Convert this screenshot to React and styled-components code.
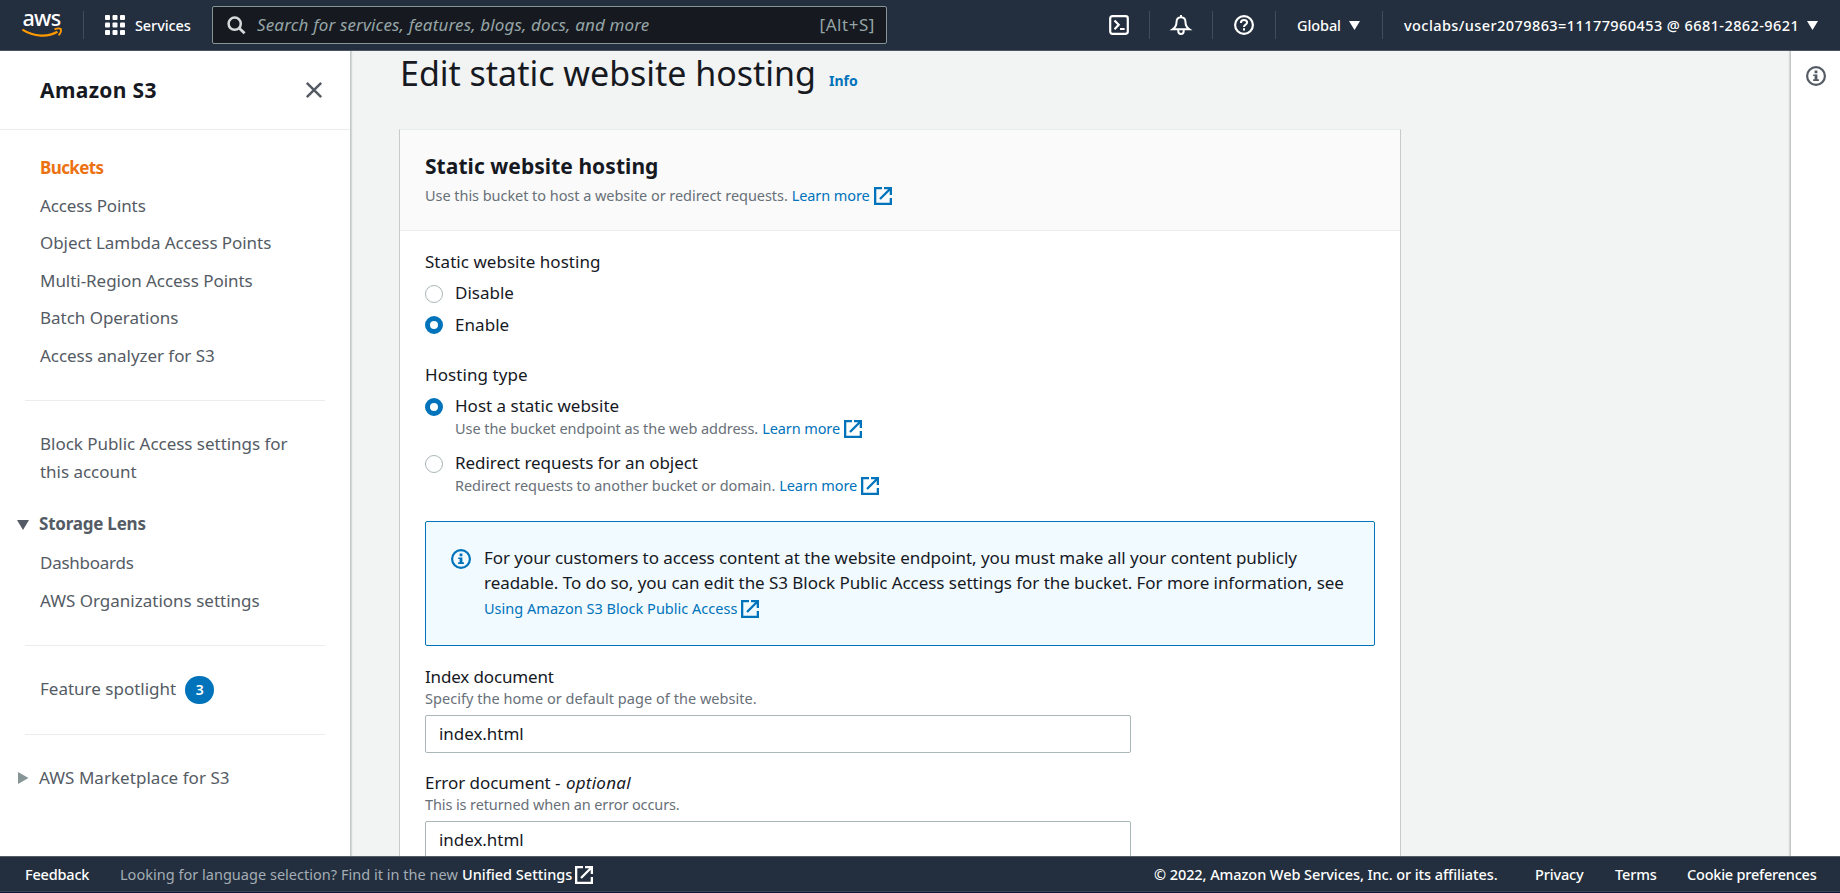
import React from 'react';
import styled, { createGlobalStyle, css } from 'styled-components';

const GlobalStyle = createGlobalStyle`
  *, *::before, *::after { box-sizing: border-box; }
  html, body { margin: 0; padding: 0; }
  body {
    font-family: "Noto Sans", "Open Sans", sans-serif;
    font-size: 17px;
    line-height: 22px;
    color: #16191f;
    background: #f2f3f3;
    overflow: hidden;
  }
  svg { display: block; flex: none; overflow: visible; }
  h1, h2, p, ul { margin: 0; padding: 0; }
`;

const tracking = css`letter-spacing: ${({ $ls = 0 }) => $ls}px;`;

const Page = styled.div`
  display: flex;
  flex-direction: column;
  height: 893px;
  overflow: hidden;
`;

/* ---------- top bar ---------- */
const TopBar = styled.header`
  flex: none;
  display: flex;
  align-items: center;
  height: 51px;
  padding: 0 22px;
  background: #232f3e;
  border-bottom: 1px solid #4b5563;
  color: #fff;
  font-size: 14.5px;
  font-weight: 500;
  white-space: nowrap;
`;
const Separator = styled.span`
  flex: none;
  width: 1px;
  height: 28px;
  background: #414d5c;
`;
const LogoSlot = styled.a`
  width: 61px;
`;
const ServicesButton = styled.a`
  display: flex;
  align-items: center;
  gap: 10px;
  width: 128px;
  padding-left: 21px;
  ${tracking}
`;
const SearchBox = styled.div`
  display: flex;
  align-items: center;
  width: 675px;
  height: 38px;
  padding: 0 11px 0 14px;
  background: #16191f;
  border: 1px solid #879596;
  border-radius: 2px;
  color: #95a5a6;
  font-size: 17px;
  font-weight: 400;
`;
const SearchHint = styled.em`
  flex: 1;
  margin-left: 11px;
  padding-bottom: 1px;
  ${tracking}
`;
const Shortcut = styled.span`
  padding-bottom: 1px;
  ${tracking}
`;
const UserTools = styled.nav`
  display: flex;
  align-items: center;
  margin-left: auto;
`;
const ToolButton = styled.a`
  display: flex;
  justify-content: center;
  width: 62px;
`;
const ToolMenu = styled.a`
  display: flex;
  align-items: center;
  justify-content: space-between;
  width: ${({ $width }) => $width}px;
  margin-left: ${({ $lead }) => $lead}px;
  margin-right: ${({ $trail = 0 }) => $trail}px;
  ${tracking}
`;

/* ---------- body columns ---------- */
const Columns = styled.div`
  flex: 1;
  display: flex;
  min-height: 0;
`;
const Sidebar = styled.aside`
  flex: none;
  width: 351px;
  background: #fff;
  border-right: 1px solid #c3c8c9;
  box-shadow: 1px 0 1px rgba(0, 28, 36, 0.12);
  color: #545b64;
  line-height: 28px;
`;
const SidebarHeader = styled.div`
  display: flex;
  align-items: center;
  justify-content: space-between;
  height: 79px;
  padding: 1px 28px 1px 40px;
  border-bottom: 1px solid #eaeded;
`;
const SidebarTitle = styled.h2`
  font-size: 21px;
  font-weight: 700;
  color: #16191f;
  padding-bottom: 1px;
  ${tracking}
`;
const NavList = styled.ul`
  display: flex;
  flex-direction: column;
  gap: 9.5px;
  list-style: none;
  padding: 0 58px 0 40px;
`;
const NavItem = styled.li`
  display: flex;
  align-items: center;
  gap: 9px;
  font-weight: ${({ $active }) => ($active ? 700 : 400)};
  color: ${({ $active }) => ($active ? '#ec7211' : 'inherit')};
  ${tracking}
`;
const NavGroup = styled.section`
  margin: 0;
  padding: ${({ $top = 29 }) => $top}px 0 0;
`;
const NavDivider = styled.hr`
  height: 1px;
  margin: ${({ $top = 30 }) => $top}px 25px 0;
  border: 0;
  background: #eaeded;
`;
const Expander = styled.div`
  display: flex;
  align-items: center;
  gap: 10px;
  padding-left: 17px;
  margin-bottom: 11px;
  font-weight: ${({ $open }) => ($open ? 700 : 400)};
  ${tracking}
`;
const ArrowSlot = styled.span`
  width: 12px;
  padding-top: 1px;
`;
const CountBadge = styled.span`
  width: 29px;
  height: 28px;
  border-radius: 14px;
  background: #0073bb;
  color: #fff;
  font-size: 14px;
  font-weight: 600;
  text-align: center;
  position: relative;
  top: 1px;
`;

/* ---------- main ---------- */
const Main = styled.main`
  flex: 1;
  display: flex;
  flex-direction: column;
  min-width: 0;
  padding-left: 49px;
`;
const TitleRow = styled.div`
  flex: none;
  display: flex;
  align-items: baseline;
  gap: 13px;
  height: 42px;
  margin-bottom: 36px;
`;
const PageTitle = styled.h1`
  font-size: 34px;
  line-height: 44px;
  font-weight: 400;
  ${tracking}
`;
const InfoLink = styled.a`
  font-size: 14px;
  font-weight: 700;
  color: #0073bb;
`;
const Card = styled.section`
  flex: 1;
  min-height: 0;
  width: 1002px;
  margin-left: -1px;
  overflow: hidden;
  background: #fff;
  border: 1px solid #c6cccd;
  border-top-color: #eaeded;
  border-bottom: 0;
`;
const CardHeader = styled.div`
  height: 101px;
  padding: 22px 25px 0;
  background: #fafafa;
  border-bottom: 1px solid #eaeded;
`;
const CardTitle = styled.h2`
  font-size: 21px;
  line-height: 28px;
  font-weight: 700;
  margin-bottom: 5px;
  ${tracking}
`;
const CardBody = styled.div`
  padding: 19px 25px 0;
`;
const Description = styled.p`
  display: flex;
  align-items: center;
  height: 20px;
  font-size: 14.5px;
  line-height: 20px;
  color: #687078;
  white-space: nowrap;
  ${tracking}
`;
const TextLink = styled.a`
  display: inline-flex;
  align-items: center;
  gap: 4px;
  margin-left: ${({ $lead = 0 }) => $lead}px;
  color: #0073bb;
  font-size: 14.5px;
  ${tracking}
`;
const FieldLabel = styled.div`
  height: 22px;
  line-height: ${({ $line = 24 }) => $line}px;
  margin: ${({ $top = 0 }) => $top}px 0 ${({ $bottom = 0 }) => $bottom}px;
  ${tracking}
`;
const Optional = styled.em`
  margin-left: 1px;
  letter-spacing: 0.25px;
`;
const RadioRow = styled.label`
  display: grid;
  grid-template-columns: 18px 1fr;
  column-gap: 12px;
  align-items: start;
  margin-top: ${({ $top }) => $top}px;
`;
const RadioDot = styled.span`
  width: 18px;
  height: 18px;
  margin-top: ${({ $drop = 4 }) => $drop}px;
  border-radius: 50%;
  background: #fff;
  border: ${({ $on }) => ($on ? '5px solid #0073bb' : '1px solid #aab7b8')};
`;
const RadioText = styled.div`
  height: 22px;
  line-height: 24px;
  ${tracking}
`;
const RadioHelp = styled.div`
  grid-column: 2;
  margin-top: 2px;
`;
const Alert = styled.div`
  display: flex;
  gap: 13px;
  height: 125px;
  margin: 26px 0 19px;
  padding: 23px 25px;
  border: 1px solid #0073bb;
  border-radius: 2px;
  background: #f1faff;
  line-height: 25px;
  white-space: nowrap;
`;
const AlertIcon = styled.span`
  padding-top: 4px;
`;
const AlertLine = styled.div`
  height: 25px;
  ${tracking}
`;
const TextInput = styled.input`
  display: block;
  width: 706px;
  height: 38px;
  margin: 7px 0 18px;
  padding: 0 13px 2px;
  border: 1px solid #aab7b8;
  border-radius: 2px;
  background: #fff;
  color: #16191f;
  font: inherit;
  letter-spacing: -0.05px;
  outline: none;
`;
const HelpRail = styled.aside`
  flex: none;
  display: flex;
  justify-content: center;
  width: 50px;
  padding-top: 15px;
  background: #fff;
  border-left: 1px solid #c3c8c9;
  box-shadow: -1px 0 1px rgba(0, 28, 36, 0.12);
`;

/* ---------- footer ---------- */
const Footer = styled.footer`
  flex: none;
  display: flex;
  align-items: center;
  height: 36px;
  padding: 0 23px 0 25px;
  background: #232f3e;
  border-top: 1px solid #545b64;
  border-bottom: 1px solid #3a4553;
  font-size: 14.5px;
  color: #fff;
  font-weight: 500;
  white-space: nowrap;
`;
const FooterItem = styled.a`
  display: flex;
  align-items: center;
  gap: 3px;
  width: ${({ $width }) => $width}px;
  ${tracking}
`;
const FooterNote = styled.span`
  width: 342px;
  color: #a3adb5;
  font-weight: 400;
  ${tracking}
`;
const FooterLegal = styled.div`
  display: flex;
  margin-left: auto;
`;
const BottomEdge = styled.div`
  flex: none;
  height: 1px;
  background: #11143a;
`;

/* ---------- icons ---------- */
const ExternalGlyph = styled.svg`
  margin-top: 1px;
`;
const ExternalIcon = ({ color = '#0073bb' }) => (
  <ExternalGlyph width="18" height="18" viewBox="0 0 18 18" fill="none" stroke={color} strokeWidth="2.3">
    <path d="M8 1.150H1.150v15.700h15.700V11" />
    <path d="M10 1.150h6.850V8M16.500 1.500 6 12" />
  </ExternalGlyph>
);
const InfoIcon = ({ color }) => (
  <svg width="20" height="20" viewBox="0 0 20 20" fill="none">
    <circle cx="10" cy="10" r="8.9" stroke={color} strokeWidth="2.2" />
    <path fill={color} d="M8.6 4.6h2.8v2.6H8.6zM7.2 8.4h4.2v4.9h1.5v1.7H7.1v-1.7h1.5V10H7.2z" />
  </svg>
);
const DownCaret = ({ color = '#fff', width = 11, height = 9 }) => (
  <svg width={width} height={height} viewBox="0 0 12 10" preserveAspectRatio="none">
    <path d="M0 0h12L6 10z" fill={color} />
  </svg>
);
const RightCaret = () => (
  <svg width="12" height="12" viewBox="0 0 12 12">
    <path d="M1 0l10.500 6L1 12z" fill="#879596" />
  </svg>
);
const AwsLogo = () => (
  <svg width="41" height="28" viewBox="0 0 41 28">
    <text x="0.6" y="14.500" fill="#fff" fontFamily="Noto Sans, sans-serif" fontWeight="500" fontSize="21.5" textLength="38.5">aws</text>
    <path d="M.4 18.600C12 26 26 26.300 35.400 20.800" fill="none" stroke="#ff9900" strokeWidth="2.300" />
    <path d="M32.500 18.400c2.500-1.100 5.200-1 6.400-.5.400 1.700-.5 4.700-2.300 6.500" fill="none" stroke="#ff9900" strokeWidth="1.700" />
  </svg>
);
const GridIcon = () => (
  <svg width="20" height="20" viewBox="0 0 20 20" fill="#fff">
    {[0, 7.5, 15].map((y) => [0, 7.5, 15].map((x) => <rect key={`${x}-${y}`} x={x} y={y} width="5" height="5" rx="1" />))}
  </svg>
);
const SearchIcon = () => (
  <svg width="19" height="19" viewBox="0 0 19 19" fill="none" stroke="#d5dbdb" strokeWidth="2.500">
    <circle cx="7.700" cy="7.700" r="6.100" />
    <path d="M12 12l5.600 5.200" strokeWidth="2.800" />
  </svg>
);
const ShellGlyph = styled.svg`
  margin-left: 2px;
`;
const ShellIcon = () => (
  <ShellGlyph width="20" height="20" viewBox="0 0 20 20" fill="none" stroke="#fff" strokeWidth="2.200">
    <rect x="1.200" y="1.200" width="17.600" height="17.600" rx="2.200" />
    <path d="M5.500 5.500L9.700 9.800 5.500 14.200M11 14h4.600" />
  </ShellGlyph>
);
const BellIcon = () => (
  <svg width="20" height="20" viewBox="0 0 20 20" fill="none" stroke="#fff" strokeWidth="2">
    <path d="M10 2.200c-3 0-4.500 2.200-4.500 5 0 3.500-1.700 5.500-3.900 7.100h16.800c-2.200-1.600-3.900-3.600-3.900-7.100 0-2.800-1.500-5-4.500-5zM10 0v2.500M7.300 14.500v1.700a2.700 2.700 0 0 0 5.400 0v-1.700" />
  </svg>
);
const HelpIcon = () => (
  <svg width="20" height="20" viewBox="0 0 20 20" fill="none" stroke="#fff" strokeWidth="2.200">
    <circle cx="10" cy="10" r="8.900" />
    <path d="M6.900 8c0-1.900 1.300-3 3.100-3s3.100 1 3.100 2.600c0 2.200-3.100 2-3.100 4.400M10 13.200v2.200" strokeWidth="2" />
  </svg>
);
const CloseIcon = () => (
  <svg width="16" height="16" viewBox="0 0 16 16" stroke="#545b64" strokeWidth="2.500">
    <path d="M.8.800l14.400 14.400M15.200.800.800 15.200" />
  </svg>
);

const bucketLinks = [
  ['Buckets', -0.6],
  ['Access Points', -0.12],
  ['Object Lambda Access Points', -0.06],
  ['Multi-Region Access Points', -0.04],
  ['Batch Operations', -0.03],
  ['Access analyzer for S3', -0.05],
];

const LearnMore = () => (
  <TextLink $lead={4} $ls={-0.1}>Learn more<ExternalIcon /></TextLink>
);

export default function App() {
  return (
    <Page>
      <GlobalStyle />
      <TopBar>
        <LogoSlot><AwsLogo /></LogoSlot>
        <Separator />
        <ServicesButton $ls={-0.1}><GridIcon />Services</ServicesButton>
        <SearchBox>
          <SearchIcon />
          <SearchHint $ls={0.15}>Search for services, features, blogs, docs, and more</SearchHint>
          <Shortcut $ls={0.55}>[Alt+S]</Shortcut>
        </SearchBox>
        <UserTools>
          <ToolButton><ShellIcon /></ToolButton>
          <Separator />
          <ToolButton><BellIcon /></ToolButton>
          <Separator />
          <ToolButton><HelpIcon /></ToolButton>
          <Separator />
          <ToolMenu $width={63} $lead={21} $trail={22} $ls={-0.1}>Global<DownCaret /></ToolMenu>
          <Separator />
          <ToolMenu $width={414} $lead={21} $ls={0.42}>
            voclabs/user2079863=11177960453 @ 6681-2862-9621<DownCaret />
          </ToolMenu>
        </UserTools>
      </TopBar>

      <Columns>
        <Sidebar>
          <SidebarHeader>
            <SidebarTitle $ls={0.35}>Amazon S3</SidebarTitle>
            <CloseIcon />
          </SidebarHeader>
          <NavGroup $top={24}>
            <NavList>
              {bucketLinks.map(([label, ls], i) => (
                <NavItem key={label} $active={i === 0} $ls={ls}>{label}</NavItem>
              ))}
            </NavList>
          </NavGroup>
          <NavDivider $top={30.5} />
          <NavGroup>
            <NavList>
              <NavItem $ls={-0.03}>Block Public Access settings for this account</NavItem>
            </NavList>
          </NavGroup>
          <NavGroup $top={24}>
            <Expander $open $ls={-0.22}>
              <ArrowSlot><DownCaret color="#545b64" width={12} height={10} /></ArrowSlot>
              Storage Lens
            </Expander>
            <NavList>
              <NavItem $ls={-0.25}>Dashboards</NavItem>
              <NavItem $ls={0}>AWS Organizations settings</NavItem>
            </NavList>
          </NavGroup>
          <NavDivider />
          <NavGroup>
            <NavList>
              <NavItem $ls={0}>Feature spotlight<CountBadge>3</CountBadge></NavItem>
            </NavList>
          </NavGroup>
          <NavDivider $top={31} />
          <NavGroup>
            <Expander $ls={0.04}>
              <ArrowSlot><RightCaret /></ArrowSlot>
              AWS Marketplace for S3
            </Expander>
          </NavGroup>
        </Sidebar>

        <Main>
          <TitleRow>
            <PageTitle $ls={-0.02}>Edit static website hosting</PageTitle>
            <InfoLink>Info</InfoLink>
          </TitleRow>
          <Card>
            <CardHeader>
              <CardTitle $ls={0.05}>Static website hosting</CardTitle>
              <Description $ls={-0.05}>
                Use this bucket to host a website or redirect requests.<LearnMore />
              </Description>
            </CardHeader>
            <CardBody>
              <FieldLabel $ls={0.04}>Static website hosting</FieldLabel>
              <RadioRow $top={9}><RadioDot /><RadioText $ls={0}>Disable</RadioText></RadioRow>
              <RadioRow $top={10}><RadioDot $on $drop={3} /><RadioText $ls={0.05}>Enable</RadioText></RadioRow>

              <FieldLabel $top={29} $line={22} $ls={0.08}>Hosting type</FieldLabel>
              <RadioRow $top={8}>
                <RadioDot $on /><RadioText>Host a static website</RadioText>
                <RadioHelp>
                  <Description $ls={-0.06}>Use the bucket endpoint as the web address.<LearnMore /></Description>
                </RadioHelp>
              </RadioRow>
              <RadioRow $top={13}>
                <RadioDot /><RadioText $ls={-0.06}>Redirect requests for an object</RadioText>
                <RadioHelp>
                  <Description $ls={-0.05}>Redirect requests to another bucket or domain.<LearnMore /></Description>
                </RadioHelp>
              </RadioRow>

              <Alert>
                <AlertIcon><InfoIcon color="#0073bb" /></AlertIcon>
                <div>
                  <AlertLine $ls={-0.06}>For your customers to access content at the website endpoint, you must make all your content publicly</AlertLine>
                  <AlertLine $ls={-0.05}>readable. To do so, you can edit the S3 Block Public Access settings for the bucket. For more information, see</AlertLine>
                  <AlertLine>
                    <TextLink $ls={0.02}>Using Amazon S3 Block Public Access<ExternalIcon /></TextLink>
                  </AlertLine>
                </div>
              </Alert>

              <FieldLabel $ls={-0.15} $bottom={1}>Index document</FieldLabel>
              <Description $ls={0.04}>Specify the home or default page of the website.</Description>
              <TextInput defaultValue="index.html" />

              <FieldLabel $ls={-0.05} $bottom={1}>Error document - <Optional>optional</Optional></FieldLabel>
              <Description $ls={-0.11}>This is returned when an error occurs.</Description>
              <TextInput defaultValue="index.html" />
            </CardBody>
          </Card>
        </Main>

        <HelpRail><InfoIcon color="#545b64" /></HelpRail>
      </Columns>

      <Footer>
        <FooterItem $width={95} $ls={-0.2}>Feedback</FooterItem>
        <FooterNote $ls={0.02}>Looking for language selection? Find it in the new</FooterNote>
        <FooterItem $width={135} $ls={0}>Unified Settings<ExternalIcon color="#fff" /></FooterItem>
        <FooterLegal>
          <FooterItem $width={381} $ls={-0.07}>© 2022, Amazon Web Services, Inc. or its affiliates.</FooterItem>
          <FooterItem $width={80} $ls={-0.15}>Privacy</FooterItem>
          <FooterItem $width={72} $ls={-0.15}>Terms</FooterItem>
          <FooterItem $width={130} $ls={-0.22}>Cookie preferences</FooterItem>
        </FooterLegal>
      </Footer>
      <BottomEdge />
    </Page>
  );
}
